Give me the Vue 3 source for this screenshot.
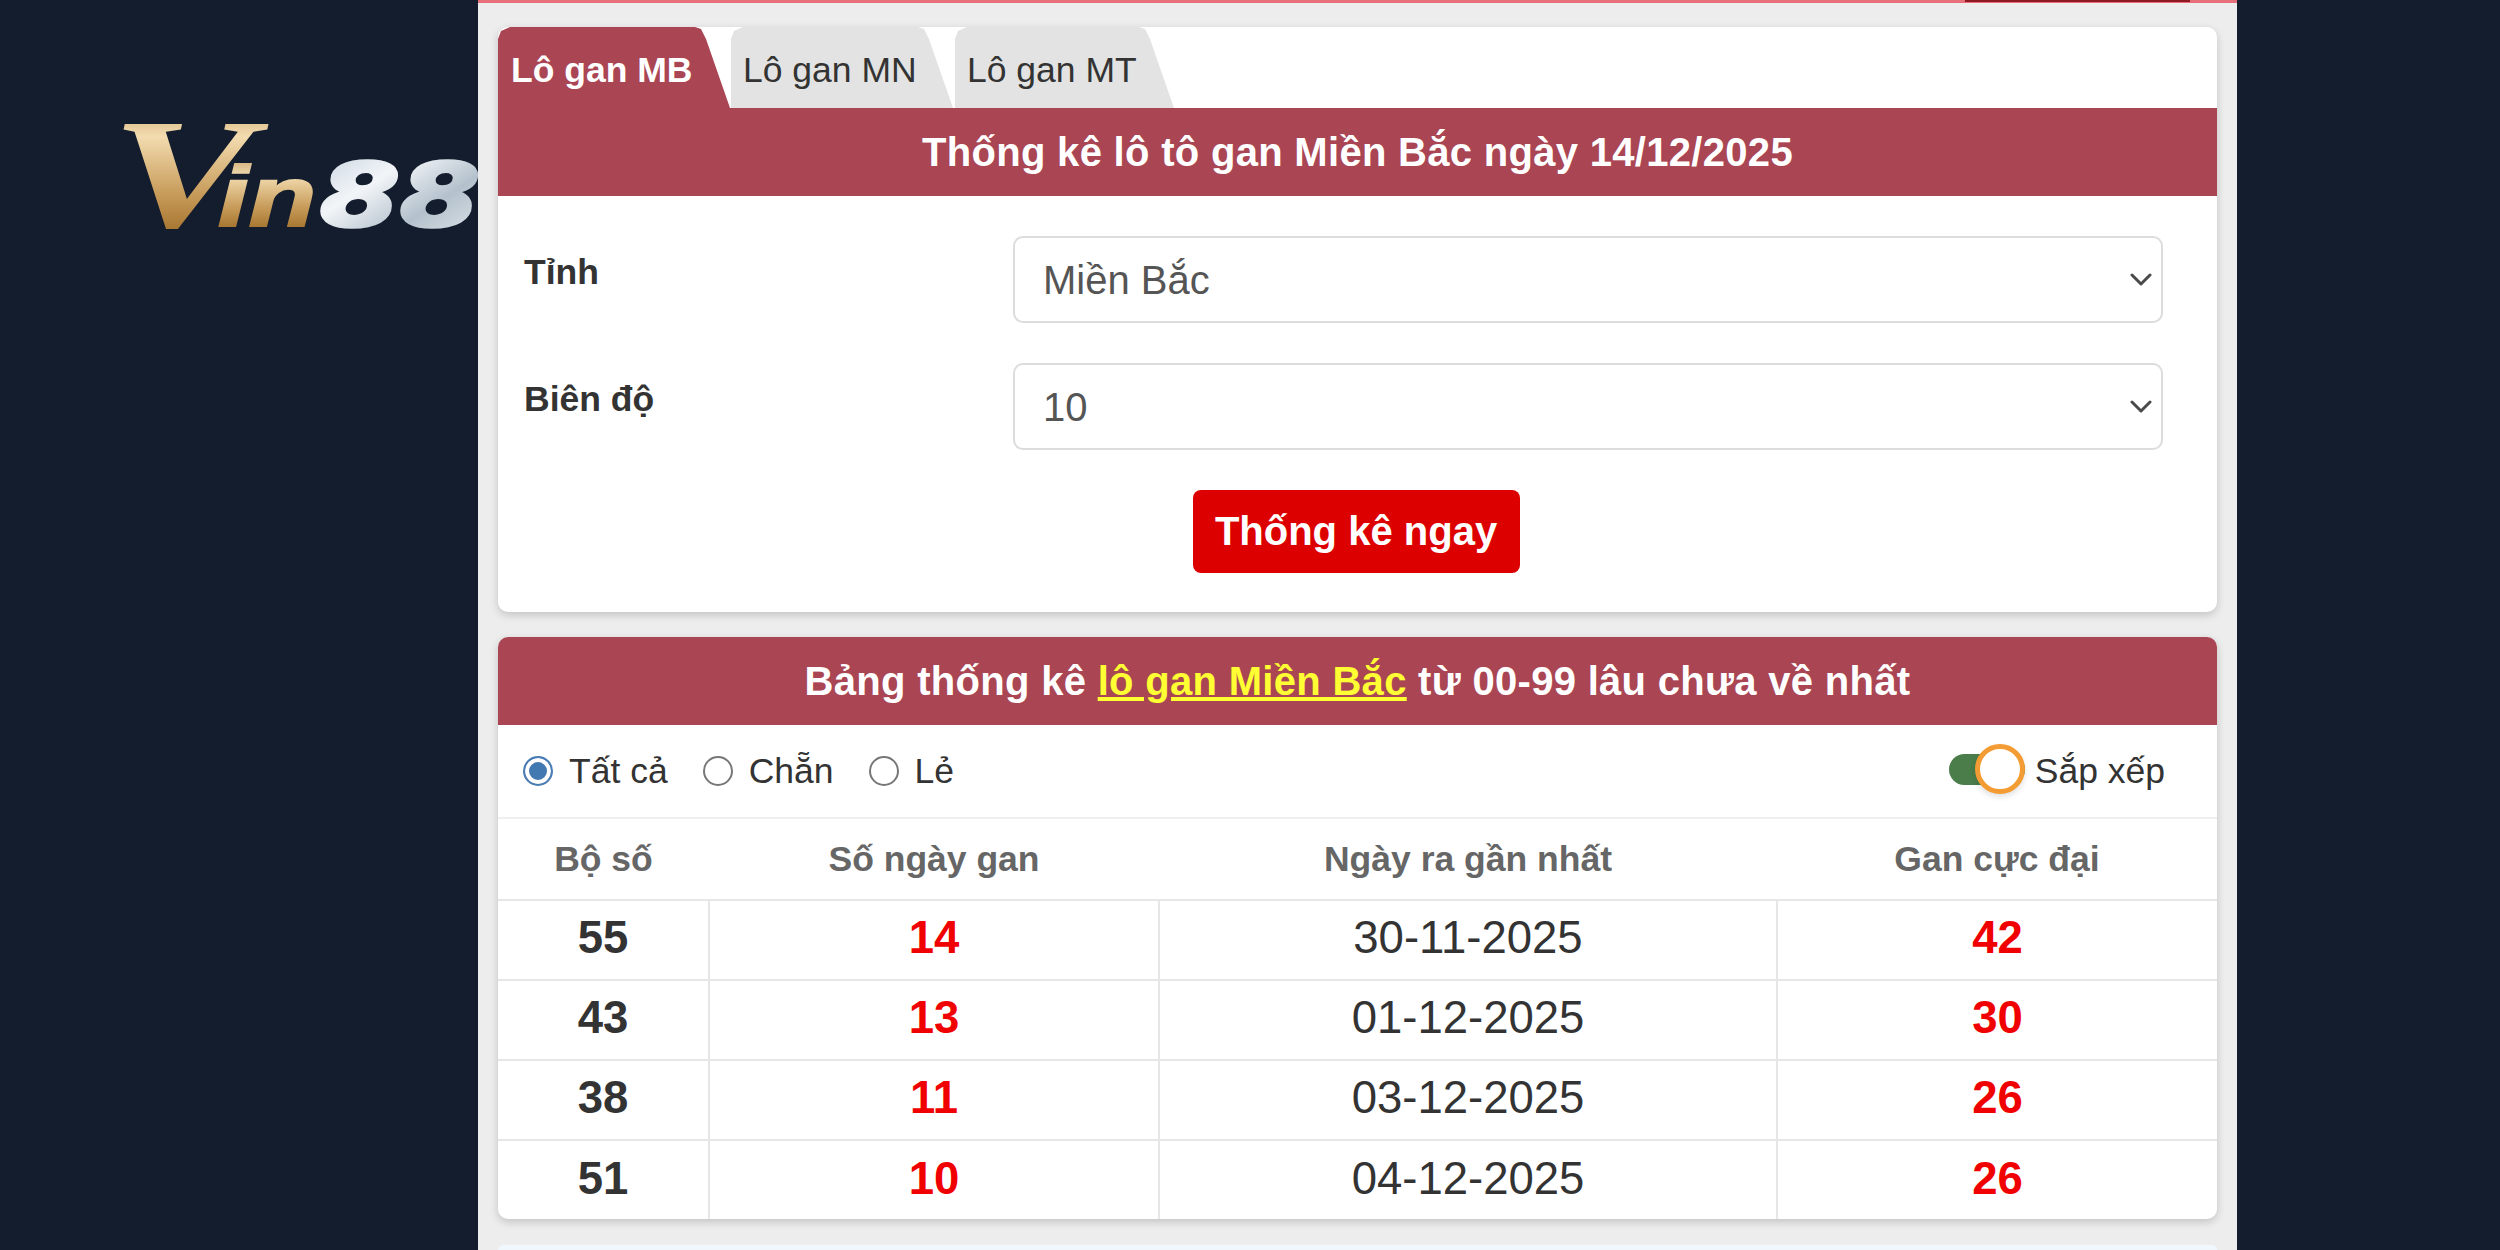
<script setup>
import { ref } from 'vue'

const tabs = [
  { label: 'Lô gan MB', active: true },
  { label: 'Lô gan MN', active: false },
  { label: 'Lô gan MT', active: false }
]
const filters = ['Tất cả', 'Chẵn', 'Lẻ']
const picked = ref('Tất cả')
const rows = [
  { num: '55', days: '14', date: '30-11-2025', max: '42' },
  { num: '43', days: '13', date: '01-12-2025', max: '30' },
  { num: '38', days: '11', date: '03-12-2025', max: '26' },
  { num: '51', days: '10', date: '04-12-2025', max: '26' }
]
</script>

<template>
  <div class="page">
    <aside class="side side-left">
      <svg class="logo" width="354" height="104" viewBox="0 0 354 104" role="img" aria-label="Vin88">
        <defs>
          <linearGradient id="gold" x1="0" y1="0" x2="0" y2="1">
            <stop offset="0" stop-color="#b98f55" />
            <stop offset="0.28" stop-color="#f3dcb0" />
            <stop offset="0.62" stop-color="#c69a58" />
            <stop offset="0.92" stop-color="#99661f" />
            <stop offset="1" stop-color="#f0d9a8" />
          </linearGradient>
          <linearGradient id="silver" x1="0" y1="0" x2="1" y2="1">
            <stop offset="0" stop-color="#c3d0dc" />
            <stop offset="0.35" stop-color="#f2f5f8" />
            <stop offset="0.65" stop-color="#b4c1cc" />
            <stop offset="1" stop-color="#e6ebef" />
          </linearGradient>
        </defs>
        <text class="logo-v" x="-13" y="103" textLength="143" lengthAdjust="spacingAndGlyphs" fill="url(#gold)">V</text>
        <text class="logo-in" x="94" y="102" textLength="98" lengthAdjust="spacingAndGlyphs" fill="url(#gold)" stroke="url(#gold)" stroke-width="2">in</text>
        <text class="logo-num" x="196" y="102" textLength="160" lengthAdjust="spacingAndGlyphs" fill="url(#silver)" stroke="url(#silver)" stroke-width="3.5">88</text>
      </svg>
    </aside>

    <main class="column">
      <div class="topline"><span class="topline-dark"></span></div>

      <section class="card form-card">
        <nav class="tabs">
          <a v-for="t in tabs" :key="t.label" class="tab" :class="{ active: t.active }">{{ t.label }}</a>
        </nav>
        <h2 class="band">Thống kê lô tô gan Miền Bắc ngày 14/12/2025</h2>
        <div class="form">
          <div class="field">
            <label class="field-label">Tỉnh</label>
            <div class="select-wrap">
              <select class="select"><option>Miền Bắc</option></select>
              <svg class="chevron" width="22" height="14" viewBox="0 0 22 14"><path d="M2 3l9 9 9-9" fill="none" stroke="#4a4a4a" stroke-width="3" stroke-linecap="round" stroke-linejoin="round" /></svg>
            </div>
          </div>
          <div class="field">
            <label class="field-label">Biên độ</label>
            <div class="select-wrap">
              <select class="select"><option>10</option></select>
              <svg class="chevron" width="22" height="14" viewBox="0 0 22 14"><path d="M2 3l9 9 9-9" fill="none" stroke="#4a4a4a" stroke-width="3" stroke-linecap="round" stroke-linejoin="round" /></svg>
            </div>
          </div>
          <div class="actions">
            <button class="submit" type="button">Thống kê ngay</button>
          </div>
        </div>
      </section>

      <section class="card table-card">
        <h2 class="band">Bảng thống kê <a class="band-link">lô gan Miền Bắc</a> từ 00-99 lâu chưa về nhất</h2>
        <div class="filters">
          <div class="radios">
            <label v-for="f in filters" :key="f" class="radio">
              <input v-model="picked" type="radio" name="kind" :value="f" />
              <span>{{ f }}</span>
            </label>
          </div>
          <div class="sort">
            <span class="switch"><span class="knob"></span></span>
            <span>Sắp xếp</span>
          </div>
        </div>
        <table class="stats">
          <colgroup>
            <col class="c1" /><col class="c2" /><col class="c3" /><col class="c4" />
          </colgroup>
          <thead>
            <tr><th>Bộ số</th><th>Số ngày gan</th><th>Ngày ra gần nhất</th><th>Gan cực đại</th></tr>
          </thead>
          <tbody>
            <tr v-for="r in rows" :key="r.num">
              <td class="num">{{ r.num }}</td>
              <td class="red">{{ r.days }}</td>
              <td>{{ r.date }}</td>
              <td class="red">{{ r.max }}</td>
            </tr>
          </tbody>
        </table>
      </section>

      <div class="next-panel"></div>
    </main>

    <aside class="side side-right"></aside>
  </div>
</template>

<style>
html, body { margin: 0; background: #141d2d; }
</style>

<style scoped>
.page {
  display: flex;
  width: 2500px;
  height: 1250px;
  overflow: hidden;
  background: #141d2d;
  font-family: "Liberation Sans", Arial, sans-serif;
  color: #333;
}
.side { flex: none; }
.side-left { width: 478px; box-sizing: border-box; padding: 124px 0 0 124px; overflow: hidden; }
.side-right { width: 263px; }
.logo { display: block; overflow: visible; }
.logo-v { font-family: "Liberation Serif", serif; font-weight: 700; font-style: italic; font-size: 156px; }
.logo-in { font-family: "Liberation Sans", sans-serif; font-weight: 700; font-style: italic; font-size: 85px; }
.logo-num { font-family: "DejaVu Sans", sans-serif; font-weight: 700; font-style: italic; font-size: 88px; }

.column {
  width: 1759px;
  flex: none;
  background: #ededed;
  box-sizing: border-box;
  padding: 0 20px;
  display: flex;
  flex-direction: column;
}
.topline {
  height: 3px;
  margin: 0 -20px 24px;
  background: #e8707a;
  position: relative;
}
.topline-dark {
  position: absolute;
  left: 1487px;
  width: 225px;
  top: 0;
  height: 2px;
  background: #8d1a22;
}
.card {
  background: #fff;
  border-radius: 10px;
  box-shadow: 0 3px 8px rgba(0, 0, 0, 0.18);
  overflow: hidden;
  flex: none;
}
.form-card { height: 585px; margin-bottom: 25px; }
.table-card { height: 582px; margin-bottom: 26px; }
.tabs { display: flex; height: 81px; gap: 1px; }
.tab {
  width: 222px;
  height: 81px;
  box-sizing: border-box;
  padding-left: 12px;
  font-size: 35.5px;
  line-height: 86px;
  color: #333;
  background: #e3e3e3;
  clip-path: polygon(0 12px, 3px 4px, 12px 0, calc(100% - 35px) 0, calc(100% - 29px) 2px, calc(100% - 24px) 12px, 100% 100%, 0 100%);
}
.tab:last-child { width: 219px; margin-left: 1px; }
.tab.active {
  width: 232px;
  background: #aa4553;
  color: #fff;
  font-weight: 700;
  padding-left: 13px;
}
.band {
  margin: 0;
  height: 88px;
  background: #aa4553;
  color: #fff;
  font-size: 40px;
  font-weight: 700;
  letter-spacing: 0.3px;
  line-height: 88px;
  text-align: center;
}
.band-link { color: #ffff33; text-decoration: underline; }
.form { padding: 40px 54px 0 26px; }
.field { display: flex; margin-bottom: 40px; }
.field-label {
  width: 489px;
  flex: none;
  padding-top: 11px;
  font-size: 35.5px;
  font-weight: 700;
  line-height: 50px;
  color: #333;
}
.select-wrap { position: relative; flex: 1; height: 87px; }
.select {
  display: block;
  width: 100%;
  height: 100%;
  box-sizing: border-box;
  padding: 0 60px 0 28px;
  border: 2px solid #dcdcdc;
  border-radius: 10px;
  background: #fff;
  appearance: none;
  font-family: inherit;
  font-size: 40px;
  color: #555;
}
.chevron { position: absolute; right: 11px; top: 36px; pointer-events: none; }
.actions { display: flex; justify-content: center; }
.submit {
  width: 327px;
  height: 83px;
  border: 0;
  border-radius: 8px;
  background: #dd0000;
  color: #fff;
  font-family: inherit;
  font-size: 40px;
  font-weight: 700;
  margin-left: 25px;
}
.filters {
  height: 92px;
  box-sizing: border-box;
  padding: 0 52px 0 25px;
  display: flex;
  align-items: center;
  justify-content: space-between;
  font-size: 35.5px;
  color: #333;
}
.radios { display: flex; gap: 35px; }
.radio { display: flex; align-items: center; gap: 16px; }
.radio input {
  appearance: none;
  margin: 0;
  width: 30px;
  height: 30px;
  box-sizing: border-box;
  border: 2px solid #777;
  border-radius: 50%;
  background: #fff;
}
.radio input:checked {
  border-color: #4a7db5;
  background: #4279b0;
  box-shadow: inset 0 0 0 4px #fff;
}
.sort { display: flex; align-items: center; gap: 10px; }
.switch {
  position: relative;
  display: block;
  width: 76px;
  height: 31px;
  margin-top: -3px;
  border-radius: 16px;
  background: #4a7d4a;
}
.knob {
  position: absolute;
  left: 26px;
  top: -10px;
  width: 50px;
  height: 50px;
  box-sizing: border-box;
  border: 5px solid #f39c33;
  border-radius: 50%;
  background: #fff;
  box-shadow: 0 3px 6px rgba(0, 0, 0, 0.12);
}
.stats {
  width: 100%;
  table-layout: fixed;
  border-collapse: collapse;
}
.c1 { width: 211px; }
.c2 { width: 450px; }
.c3 { width: 618px; }
.c4 { width: 440px; }
.stats th {
  height: 80px;
  padding: 0;
  border-top: 2px solid #efefef;
  font-size: 35.5px;
  font-weight: 700;
  color: #666;
  text-align: center;
}
.stats td {
  height: 78px;
  padding: 0 0 4px;
  box-sizing: border-box;
  border-top: 2px solid #e6e6e6;
  border-left: 2px solid #e6e6e6;
  font-size: 45.5px;
  color: #333;
  text-align: center;
}
.stats tbody tr { height: 80px; }
.stats td:first-child { border-left: 0; }
.stats td.num { font-weight: 700; }
.stats td.red { font-weight: 700; color: #f00000; }
.next-panel { flex: 1; background: #f0f7fd; border-radius: 10px 10px 0 0; }
</style>
